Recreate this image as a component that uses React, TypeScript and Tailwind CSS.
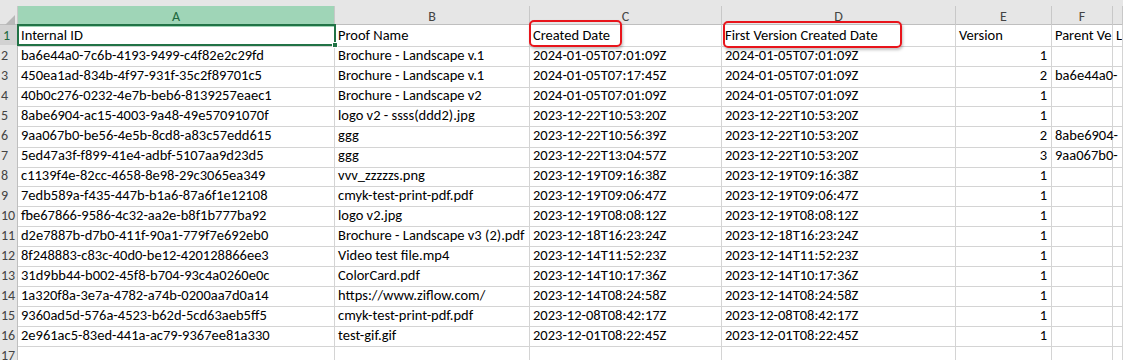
const rows: string[][] = [
  ["Internal ID", "Proof Name", "Created Date", "First Version Created Date", "Version", "Parent Ve", "L"],
  ["ba6e44a0-7c6b-4193-9499-c4f82e2c29fd", "Brochure - Landscape v.1", "2024-01-05T07:01:09Z", "2024-01-05T07:01:09Z", "1", "", ""],
  ["450ea1ad-834b-4f97-931f-35c2f89701c5", "Brochure - Landscape v.1", "2024-01-05T07:17:45Z", "2024-01-05T07:01:09Z", "2", "ba6e44a0-", ""],
  ["40b0c276-0232-4e7b-beb6-8139257eaec1", "Brochure - Landscape v2", "2024-01-05T07:01:09Z", "2024-01-05T07:01:09Z", "1", "", ""],
  ["8abe6904-ac15-4003-9a48-49e57091070f", "logo v2 - ssss(ddd2).jpg", "2023-12-22T10:53:20Z", "2023-12-22T10:53:20Z", "1", "", ""],
  ["9aa067b0-be56-4e5b-8cd8-a83c57edd615", "ggg", "2023-12-22T10:56:39Z", "2023-12-22T10:53:20Z", "2", "8abe6904-", ""],
  ["5ed47a3f-f899-41e4-adbf-5107aa9d23d5", "ggg", "2023-12-22T13:04:57Z", "2023-12-22T10:53:20Z", "3", "9aa067b0-", ""],
  ["c1139f4e-82cc-4658-8e98-29c3065ea349", "vvv_zzzzzs.png", "2023-12-19T09:16:38Z", "2023-12-19T09:16:38Z", "1", "", ""],
  ["7edb589a-f435-447b-b1a6-87a6f1e12108", "cmyk-test-print-pdf.pdf", "2023-12-19T09:06:47Z", "2023-12-19T09:06:47Z", "1", "", ""],
  ["fbe67866-9586-4c32-aa2e-b8f1b777ba92", "logo v2.jpg", "2023-12-19T08:08:12Z", "2023-12-19T08:08:12Z", "1", "", ""],
  ["d2e7887b-d7b0-411f-90a1-779f7e692eb0", "Brochure - Landscape v3 (2).pdf", "2023-12-18T16:23:24Z", "2023-12-18T16:23:24Z", "1", "", ""],
  ["8f248883-c83c-40d0-be12-420128866ee3", "Video test file.mp4", "2023-12-14T11:52:23Z", "2023-12-14T11:52:23Z", "1", "", ""],
  ["31d9bb44-b002-45f8-b704-93c4a0260e0c", "ColorCard.pdf", "2023-12-14T10:17:36Z", "2023-12-14T10:17:36Z", "1", "", ""],
  ["1a320f8a-3e7a-4782-a74b-0200aa7d0a14", "https://www.ziflow.com/", "2023-12-14T08:24:58Z", "2023-12-14T08:24:58Z", "1", "", ""],
  ["9360ad5d-576a-4523-b62d-5cd63aeb5ff5", "cmyk-test-print-pdf.pdf", "2023-12-08T08:42:17Z", "2023-12-08T08:42:17Z", "1", "", ""],
  ["2e961ac5-83ed-441a-ac79-9367ee81a330", "test-gif.gif", "2023-12-01T08:22:45Z", "2023-12-01T08:22:45Z", "1", "", ""],
  ["", "", "", "", "", "", ""],
];

const letters = ["A", "B", "C", "D", "E", "F", ""];
const cols = "grid grid-cols-[18px_317px_195px_192px_234px_96px_61px_1fr]";

function cellClass(ri: number, ci: number) {
  if (ci === 4 && ri > 0) {
    return "flex items-center justify-end overflow-hidden whitespace-nowrap border-r border-b border-[#d4d4d4] pr-[4px]";
  }
  if (ci === 5 && ri > 0) {
    // empty G column lets the text spill over, like Excel does
    return "relative z-10 flex items-center overflow-visible whitespace-nowrap border-r border-b border-[#d4d4d4] pl-[3px]";
  }
  return "flex items-center overflow-hidden whitespace-nowrap border-r border-b border-[#d4d4d4] pl-[3px]";
}

export default function App() {
  return (
    <div className="relative h-[360px] w-[1123px] overflow-hidden bg-white font-['Carlito','Lato',sans-serif] text-[14.5px] text-black">
      <div className="h-[6px] bg-[#e6e6e6]" />
      {/* column headers */}
      <div className={`${cols} h-[19px] border-b border-[#bfbfbf] bg-[#e6e6e6] text-[14px] text-[#444]`}>
        <div className="relative border-r border-[#c8c8c8]">
          <div className="absolute bottom-[2px] right-[2px] h-0 w-0 border-b-[10px] border-l-[10px] border-b-[#b8b8b8] border-l-transparent" />
        </div>
        {letters.map((l, i) => (
          <div
            key={i}
            className={
              i === 0
                ? "flex items-center justify-center border-r border-[#c8c8c8] bg-[#9fd5b7] text-[#1e6a40]"
                : "flex items-center justify-center border-r border-[#c8c8c8]"
            }
          >
            {l}
          </div>
        ))}
      </div>
      {/* rows */}
      {rows.map((r, ri) => (
        <div key={ri} className={`${cols} h-[20px]`}>
          <div
            className={
              ri === 0
                ? "flex items-center border-r border-b border-[#bfbfbf] bg-[#d2d2d2] pl-[3px] text-[14px] text-[#1e6a40]"
                : "flex items-center border-r border-b border-[#bfbfbf] bg-[#e6e6e6] pl-[1px] text-[14px] text-[#444]"
            }
          >
            {ri + 1}
          </div>
          {r.map((c, ci) => (
            <div key={ci} className={cellClass(ri, ci)}>
              {c}
            </div>
          ))}
        </div>
      ))}
      {/* selected cell A1 */}
      <div className="pointer-events-none absolute left-[17px] top-[24px] h-[22px] w-[319px] border-2 border-[#217346]">
        <div className="absolute -bottom-[4px] -right-[4px] h-[6px] w-[6px] border border-white bg-[#217346]" />
      </div>
      {/* highlight boxes */}
      <div className="pointer-events-none absolute left-[529px] top-[20px] h-[27px] w-[93px] rounded-[5px] border-2 border-[#e8141b] shadow-[1px_2px_3px_rgba(0,0,0,0.25)]" />
      <div className="pointer-events-none absolute left-[723px] top-[21px] h-[27px] w-[179px] rounded-[5px] border-2 border-[#e8141b] shadow-[1px_2px_3px_rgba(0,0,0,0.25)]" />
    </div>
  );
}
